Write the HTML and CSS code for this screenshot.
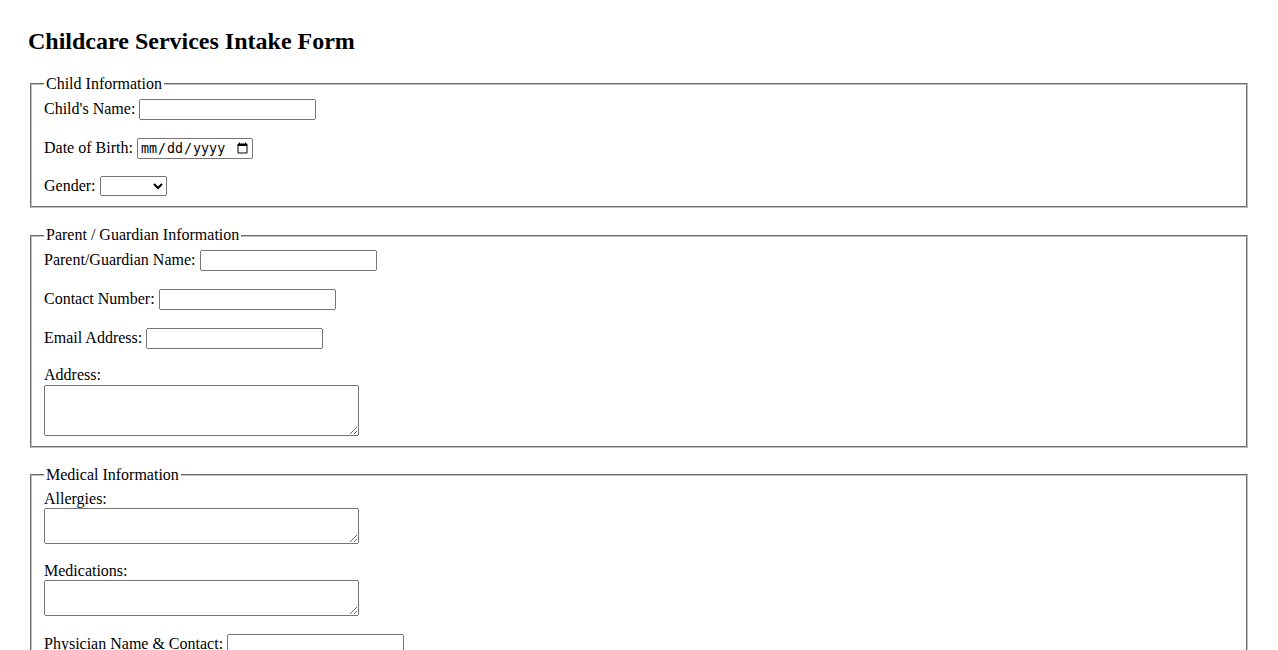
FILE: index.html
```html
<!DOCTYPE html>
<html>
<head>
<meta charset="utf-8">
<title>Childcare Services Intake Form</title>
<link rel="stylesheet" href="styles.css">
</head>
<body>
<h2 class="title">Childcare Services Intake Form</h2>
<form class="intake">
  <fieldset class="section">
    <legend class="section-legend">Child Information</legend>
    <div class="row"><label for="cname">Child's Name:</label> <input class="text" id="cname" type="text"></div>
    <div class="row"><label for="dob">Date of Birth:</label> <input class="date" id="dob" type="date"></div>
    <div class="row last"><label for="gender">Gender:</label> <select class="select" id="gender"><option></option><option>Male</option><option>Female</option><option>Other</option></select></div>
  </fieldset>
  <fieldset class="section">
    <legend class="section-legend">Parent / Guardian Information</legend>
    <div class="row"><label for="pname">Parent/Guardian Name:</label> <input class="text" id="pname" type="text"></div>
    <div class="row"><label for="phone">Contact Number:</label> <input class="text" id="phone" type="tel"></div>
    <div class="row"><label for="email">Email Address:</label> <input class="text" id="email" type="email"></div>
    <div class="row last"><label class="block-label" for="addr">Address:</label><textarea class="area tall" id="addr"></textarea></div>
  </fieldset>
  <fieldset class="section">
    <legend class="section-legend">Medical Information</legend>
    <div class="row"><label class="block-label" for="allergies">Allergies:</label><textarea class="area" id="allergies"></textarea></div>
    <div class="row"><label class="block-label" for="meds">Medications:</label><textarea class="area" id="meds"></textarea></div>
    <div class="row"><label for="phys">Physician Name &amp; Contact:</label> <input class="text" id="phys" type="text"></div>
  </fieldset>
</form>
</body>
</html>
```

FILE: styles.css
```css
body {
  margin: 0;
  padding: 28px;
  font-family: "Liberation Serif", "Times New Roman", serif;
  font-size: 16px;
  line-height: 1.15;
  color: #000;
  background: #fff;
}

.title {
  font-size: 24px;
  font-weight: bold;
  line-height: 27px;
  margin: 0 0 20px;
}

.section {
  margin: 0 2px 18px;
  padding: 5.6px 12px 10px;
  border: 2px groove #c0c0c0;
}

.section-legend {
  padding: 0 2px;
}

.row {
  margin-bottom: 17.7px;
}

.row.last {
  margin-bottom: 0;
}

.block-label {
  display: block;
}

.text {
  box-sizing: border-box;
  width: 177px;
  height: 21px;
}

.date {
  box-sizing: border-box;
  width: 116px;
  height: 21px;
}

.select {
  box-sizing: border-box;
  width: 67px;
  height: 20px;
}

.area {
  display: block;
  box-sizing: border-box;
  width: 315px;
  height: 36px;
}

.area.tall {
  height: 51px;
}
```
